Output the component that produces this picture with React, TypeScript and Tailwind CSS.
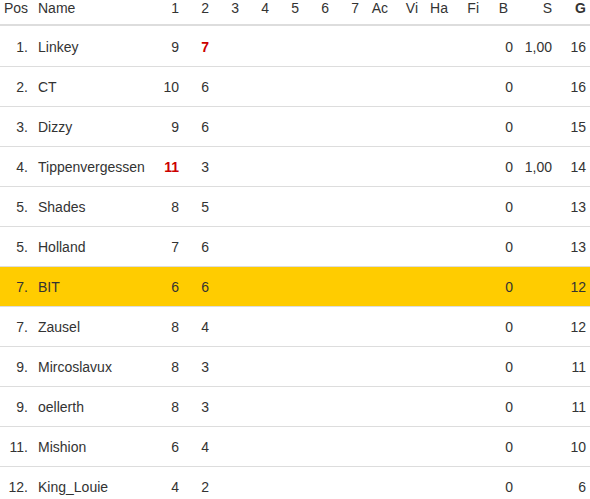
import React from 'react';

interface Row {
  pos: string;
  name: string;
  r1: string;
  r2: string;
  red1?: boolean;
  red2?: boolean;
  b: string;
  s: string;
  g: string;
  mine?: boolean;
}

const rows: Row[] = [
  { pos: '1.', name: 'Linkey', r1: '9', r2: '7', red2: true, b: '0', s: '1,00', g: '16' },
  { pos: '2.', name: 'CT', r1: '10', r2: '6', b: '0', s: '', g: '16' },
  { pos: '3.', name: 'Dizzy', r1: '9', r2: '6', b: '0', s: '', g: '15' },
  { pos: '4.', name: 'Tippenvergessen', r1: '11', r2: '3', red1: true, b: '0', s: '1,00', g: '14' },
  { pos: '5.', name: 'Shades', r1: '8', r2: '5', b: '0', s: '', g: '13' },
  { pos: '5.', name: 'Holland', r1: '7', r2: '6', b: '0', s: '', g: '13' },
  { pos: '7.', name: 'BIT', r1: '6', r2: '6', b: '0', s: '', g: '12', mine: true },
  { pos: '7.', name: 'Zausel', r1: '8', r2: '4', b: '0', s: '', g: '12' },
  { pos: '9.', name: 'Mircoslavux', r1: '8', r2: '3', b: '0', s: '', g: '11' },
  { pos: '9.', name: 'oellerth', r1: '8', r2: '3', b: '0', s: '', g: '11' },
  { pos: '11.', name: 'Mishion', r1: '6', r2: '4', b: '0', s: '', g: '10' },
  { pos: '12.', name: 'King_Louie', r1: '4', r2: '2', b: '0', s: '', g: '6' },
];

const Cells: React.FC<{ row?: Row }> = ({ row }) => {
  const red = 'font-bold text-[#cc0000]';
  return (
    <>
      <div className="w-[28px] text-right whitespace-nowrap">{row ? row.pos : 'Pos'}</div>
      <div className="w-[121px] pl-[10px] whitespace-nowrap">{row ? row.name : 'Name'}</div>
      <div className={`w-[30px] text-right ${row?.red1 ? red : ''}`}>{row ? row.r1 : '1'}</div>
      <div className={`w-[30px] text-right ${row?.red2 ? red : ''}`}>{row ? row.r2 : '2'}</div>
      <div className="w-[30px] text-right">{row ? '' : '3'}</div>
      <div className="w-[30px] text-right">{row ? '' : '4'}</div>
      <div className="w-[30px] text-right">{row ? '' : '5'}</div>
      <div className="w-[30px] text-right">{row ? '' : '6'}</div>
      <div className="w-[30px] text-right">{row ? '' : '7'}</div>
      <div className="w-[29px] text-right">{row ? '' : 'Ac'}</div>
      <div className="w-[30px] text-right">{row ? '' : 'Vi'}</div>
      <div className="w-[30px] text-right">{row ? '' : 'Ha'}</div>
      <div className="w-[31px] text-right">{row ? '' : 'Fi'}</div>
      <div className={`w-[34px] text-right ${row ? '' : 'pr-[5px]'}`}>{row ? row.b : 'B'}</div>
      <div className="w-[39px] text-right">{row ? row.s : 'S'}</div>
      <div className={`w-[34px] text-right ${row ? '' : 'font-bold'}`}>{row ? row.g : 'G'}</div>
    </>
  );
};

export default function App() {
  return (
    <div
      className="w-[590px] h-[499px] overflow-hidden bg-white text-[#333333] text-[14px] leading-[20px]"
      style={{ fontFamily: '"Liberation Sans", Arial, sans-serif' }}
    >
      <div className="flex items-end h-[26px] pb-[6px] border-b-2 border-[#dddddd]">
        <Cells />
      </div>
      {rows.map((row, i) => (
        <div
          key={i}
          className={`flex items-start ${
            i === 0 ? 'h-[40px] pt-[11px]' : 'h-[40px] pt-[10px] border-t border-[#dddddd]'
          } ${row.mine ? 'bg-[#ffcc00]' : ''}`}
        >
          <Cells row={row} />
        </div>
      ))}
    </div>
  );
}
